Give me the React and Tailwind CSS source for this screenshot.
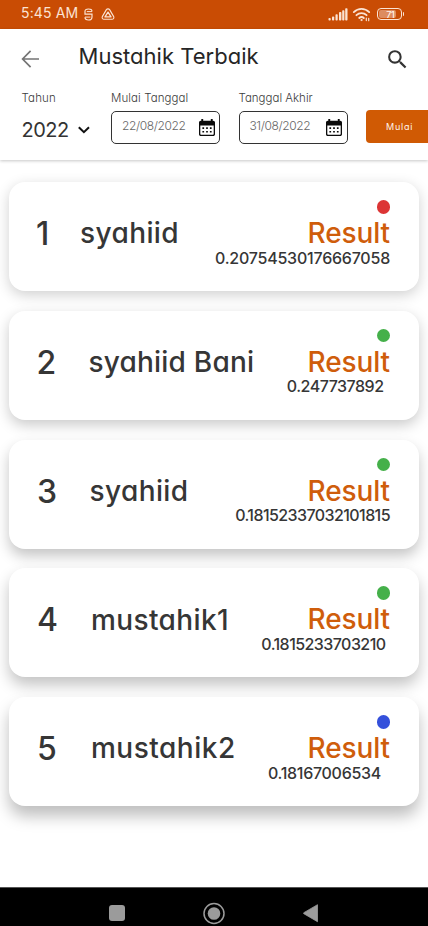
import { MdSearch } from "react-icons/md";

const entries = [
  {
    rank: "1", name: "syahiid", value: "0.20754530176667058", dot: "bg-[#dc3535]",
    rankClass: "w-[43.500px] pl-[27px]", nameClass: "tracking-[0.400px]", valueClass: "tracking-[-0.22px]",
    shadow: "shadow-[0_4px_14px_rgba(0,0,0,0.19)]",
  },
  {
    rank: "2", name: "syahiid Bani", value: "0.247737892", dot: "bg-[#45b04a]",
    rankClass: "w-[52px] pl-[27.500px]", nameClass: "tracking-[0.200px]", valueClass: "tracking-[-0.50px] mr-[6.500px]",
    shadow: "shadow-[0_5px_14px_rgba(0,0,0,0.21)]",
  },
  {
    rank: "3", name: "syahiid", value: "0.18152337032101815", dot: "bg-[#45b04a]",
    rankClass: "w-[53px] pl-[28px]", nameClass: "tracking-[0.400px]", valueClass: "tracking-[-0.58px]",
    shadow: "shadow-[0_7px_14px_rgba(0,0,0,0.23)]",
  },
  {
    rank: "4", name: "mustahik1", value: "0.1815233703210", dot: "bg-[#45b04a]",
    rankClass: "w-[54.500px] pl-[28px]", nameClass: "tracking-[0.380px]", valueClass: "tracking-[-0.56px] mr-[4.5px]",
    shadow: "shadow-[0_8px_15px_rgba(0,0,0,0.24)]",
  },
  {
    rank: "5", name: "mustahik2", value: "0.18167006534", dot: "bg-[#3450db]",
    rankClass: "w-[54.500px] pl-[28px]", nameClass: "tracking-[0.500px]", valueClass: "tracking-[-0.29px] mr-[9px]",
    shadow: "shadow-[0_10px_16px_rgba(0,0,0,0.26)]",
  },
];

function StatusBar() {
  return (
    <div className="flex h-[28.5px] items-start bg-[#c94c04] pl-[21px] text-[#fbe3d3]">
      <span className="mt-[3px] w-[62.500px] whitespace-nowrap text-[14px] leading-5 tracking-[0.15px]">5:45 AM</span>
      <svg className="mt-[8px]" width="9" height="13" viewBox="0 0 9 13" fill="none" stroke="currentColor" strokeWidth="1.2">
        <path d="M8 3.400C8 1.600 6.800 1 4.500 1S1 1.600 1 3.300v2.900h7v2.700c0 2-1.200 3.100-3.500 3.100S1 10.900 1 9.300" />
        <path d="M2.800 3.600H8M1 9.100h5.400" strokeWidth="1" />
      </svg>
      <svg className="ml-[8.500px] mt-[7.500px]" width="14" height="13" viewBox="0 0 14 13" fill="none" stroke="currentColor" strokeWidth="1.1" strokeLinejoin="round">
        <path d="M5.400 1.600C6.100.6 7.900.6 8.600 1.600l4.100 7c.6 1.400-.3 2.700-1.700 2.700H3c-1.400 0-2.300-1.300-1.700-2.700z" />
        <path d="M7 4.100 10 8.900H4z" strokeWidth="1.300" />
      </svg>
      <svg className="ml-[213px] mt-[8px]" width="20" height="13" viewBox="0 0 20 13" fill="currentColor">
        <rect x="0.500" y="10" width="2.200" height="2.500" rx="0.800" />
        <rect x="4" y="8.500" width="2.200" height="4" rx="0.800" />
        <rect x="7.500" y="6.200" width="2.200" height="6.300" rx="0.800" />
        <rect x="11" y="4" width="2.400" height="8.500" rx="0.800" />
        <rect x="14.200" y="2.200" width="2.200" height="10.300" rx="0.800" />
        <rect x="17.200" y="0.300" width="2.300" height="12.200" rx="0.800" />
      </svg>
      <svg className="ml-[4px] mt-[7px]" width="20" height="15" viewBox="0 0 20 15" fill="none" stroke="currentColor" strokeWidth="1.800" strokeLinecap="round">
        <path d="M1.800 5.100c4.300-4.400 11.100-4.400 15.400 0M4.400 8.200c2.900-2.900 7.300-2.900 10.200 0M7.200 11c1.500-1.300 3.300-1.300 4.600 0" />
        <circle cx="9.400" cy="13" r="0.600" fill="currentColor" strokeWidth="1" />
        <path d="M14.300 13.600v-2.400M16.700 11.300v2.400" strokeWidth="1.200" />
      </svg>
      <div className="ml-[4.500px] mt-[8px] flex h-[12px] w-[25.500px] rounded-[4px] border-[1.300px] border-[#fbe3d3] p-px">
        <div className="flex h-full w-[17px] items-center justify-end rounded-[2px] bg-[#dd8c60] pr-px text-[9px] font-medium leading-none tracking-[-0.3px] text-[#fff3ea]">71</div>
      </div>
      <div className="ml-[0.500px] mt-[12px] h-[4px] w-[1.500px] rounded-r-[1px] bg-[#fbe3d3]" />
    </div>
  );
}

function CalendarIcon() {
  return (
    <svg className="mt-px" width="16" height="18" viewBox="0 0 16 18">
      <path fill="#0b0b0b" fillRule="evenodd" d="M2.300 0h1.900v1.800h7.600V0h1.900v1.800h.5C15.200 1.800 16 2.600 16 3.600v11.600c0 1-.8 1.800-1.800 1.800H1.800C.8 17 0 16.200 0 15.200V3.600c0-1 .8-1.800 1.800-1.800h.5zM1.300 6.500v8.500c0 .4.300.7.700.7h12c.4 0 .7-.3.700-.7V6.500z" />
      <path fill="#0b0b0b" d="M3.400 8.300h1.700v1.700H3.400zM7.150 8.300h1.700v1.700h-1.700zM10.900 8.300h1.700v1.700h-1.700zM3.400 11.900h1.700v1.700H3.400zM7.150 11.900h1.700v1.700h-1.700zM10.900 11.900h1.700v1.700h-1.700z" />
    </svg>
  );
}

function DateField({ label, value, labelClass, valueClass }) {
  return (
    <div className="w-[109px]">
      <div className={`whitespace-nowrap text-[11.500px] font-light leading-4 text-[#3c3c3c] ${labelClass}`}>{label}</div>
      <div className="mt-[5px] flex h-[33.500px] items-center justify-between rounded-[5px] border border-[#333] pl-[10px] pr-[4.500px]">
        <span className={`-mt-[3px] whitespace-nowrap text-[12px] font-light leading-4 text-[#666] ${valueClass}`}>{value}</span>
        <CalendarIcon />
      </div>
    </div>
  );
}

function Header() {
  return (
    <header className="h-[131.500px] overflow-hidden bg-white shadow-[0_1px_3px_rgba(0,0,0,0.22)]">
      <div className="flex h-[61px] items-start pl-[21px] pt-[11.500px]">
        <svg className="mt-[10px]" width="19" height="18" viewBox="0 0 19 18" fill="none" stroke="#747474" strokeWidth="1.700">
          <path d="M18 9H1.600M9.600.9 1.600 9l8 8.100" />
        </svg>
        <h1 className="ml-[38.500px] whitespace-nowrap text-[22px] font-normal leading-8 tracking-[0.02px] text-[#262626]">Mustahik Terbaik</h1>
        <MdSearch className="ml-auto mr-[18.500px] mt-[6.500px] size-[25px] text-[#333]" />
      </div>
      <div className="flex items-start pl-[21.500px]">
        <div className="w-[89.500px] shrink-0">
          <div className="text-[11.500px] font-light leading-4 tracking-[0.15px] text-[#3c3c3c]">Tahun</div>
          <div className="mt-[10.500px] flex items-center">
            <span className="w-[56.500px] text-[20px] leading-7 tracking-[-0.500px] text-[#333]">2022</span>
            <svg className="-mt-px" width="12" height="8" viewBox="0 0 12 8" fill="none" stroke="#111" strokeWidth="2">
              <path d="m.8 1.200 5.100 5 5.100-5" />
            </svg>
          </div>
        </div>
        <div className="flex shrink-0 gap-[18.500px]">
          <DateField label="Mulai Tanggal" value="22/08/2022" labelClass="tracking-[0.08px]" valueClass="tracking-[-0.380px]" />
          <DateField label="Tanggal Akhir" value="31/08/2022" labelClass="tracking-[0px]" valueClass="tracking-[-0.400px]" />
          <button className="mt-[20.500px] h-[33px] w-[70px] rounded-[4px] bg-[#d05a04] pl-[20px] text-left text-[9px] font-normal leading-[32px] tracking-[0.800px] text-[#fff3ea]">Mulai</button>
        </div>
      </div>
    </header>
  );
}

function ResultCard({ entry }) {
  return (
    <li className={`flex h-[109px] items-start rounded-[16px] bg-white font-medium text-[#363636] ${entry.shadow}`}>
      <span className={`mr-[27.500px] mt-[32px] shrink-0 text-[32px] leading-10 ${entry.rankClass}`}>{entry.rank}</span>
      <span className={`mt-[31.300px] w-0 whitespace-nowrap text-[28px] leading-10 ${entry.nameClass}`}>{entry.name}</span>
      <div className="ml-auto mr-[29px] flex flex-col items-end pt-[18px]">
        <div className={`size-[13.500px] rounded-full ${entry.dot}`} />
        <div className="mt-[5.500px] text-[28px] leading-7 tracking-[-0.100px] text-[#cf5d0b]">Result</div>
        <div className={`mt-[0.500px] whitespace-nowrap text-[16px] leading-5 ${entry.valueClass}`}>{entry.value}</div>
      </div>
    </li>
  );
}

function NavigationBar() {
  return (
    <nav className="flex h-[39px] items-start border-t border-[#555] bg-black pl-[108.500px]">
      <div className="mt-[17px] size-[16px] rounded-[3px] bg-[#9b9b9b]" />
      <svg className="ml-[78px] mt-[13.500px]" width="23" height="23" viewBox="0 0 23 23">
        <circle cx="11" cy="11.500" r="10" fill="none" stroke="#9b9b9b" strokeWidth="1.500" />
        <circle cx="11" cy="11.500" r="6.300" fill="#9b9b9b" />
      </svg>
      <svg className="ml-[77.500px] mt-[16px]" width="16" height="19" viewBox="0 0 16 19">
        <path d="M14.500.7v17L.800 9.700c-.5-.300-.5-.700 0-1z" fill="#9b9b9b" stroke="#9b9b9b" strokeWidth="0.800" strokeLinejoin="round" />
      </svg>
    </nav>
  );
}

export default function App() {
  return (
    <div className="flex h-[926px] w-[428px] flex-col overflow-hidden bg-white font-['Inter',sans-serif] [font-feature-settings:'cv11']">
      <StatusBar />
      <Header />
      <ul className="flex flex-1 flex-col gap-[19.800px] px-[9px] pt-[22px]">
        {entries.map((entry) => (
          <ResultCard key={entry.rank} entry={entry} />
        ))}
      </ul>
      <NavigationBar />
    </div>
  );
}
